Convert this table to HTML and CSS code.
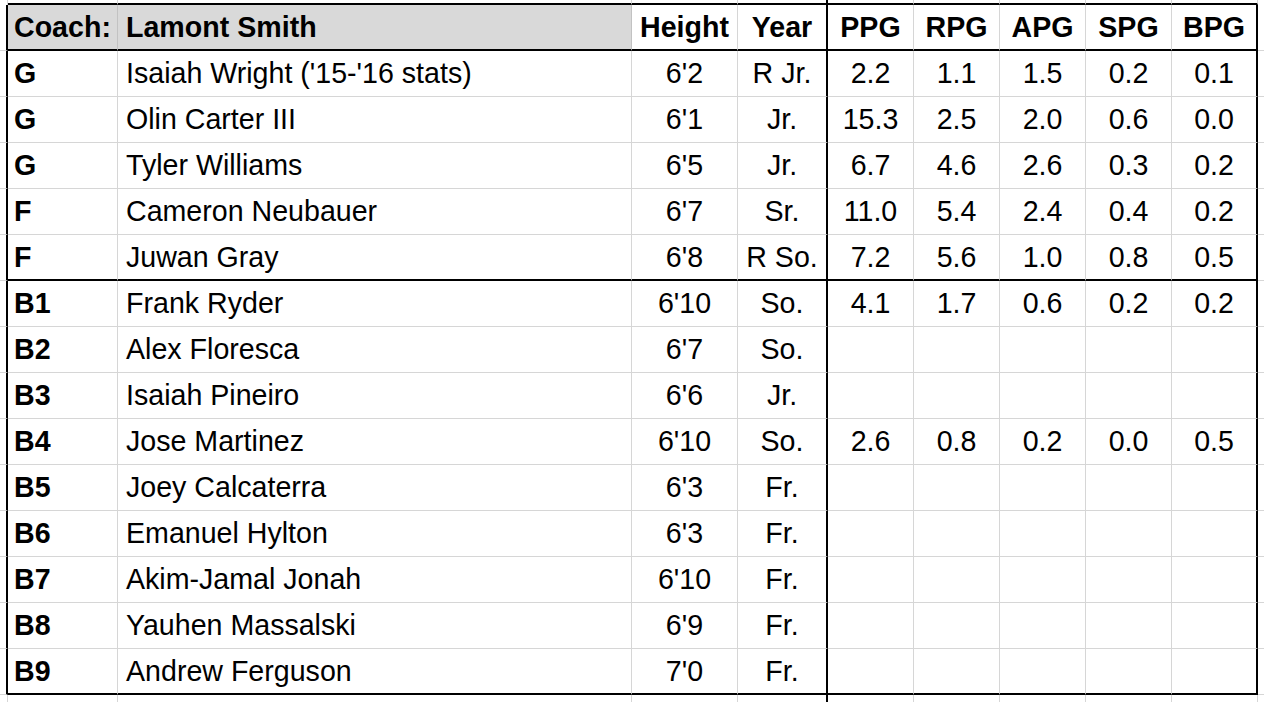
FILE: index.html
```html
<!DOCTYPE html>
<html>
<head>
<meta charset="utf-8">
<title>Roster</title>
<link rel="stylesheet" href="styles.css">
</head>
<body>
<table class="sheet">
  <colgroup>
    <col class="w-edge"><col class="w-pos"><col class="w-name"><col class="w-height"><col class="w-year">
    <col class="w-stat"><col class="w-stat"><col class="w-stat"><col class="w-stat"><col class="w-stat"><col class="w-extra">
  </colgroup>
  <tr class="r-top">
    <td class="e"></td><td class="tb"></td><td class="tb"></td><td class="tb"></td><td class="tb tr"></td>
    <td class="tb"></td><td class="tb"></td><td class="tb"></td><td class="tb"></td><td class="tb"></td><td class="x"></td>
  </tr>
  <tr class="r-head">
    <td class="e tr"></td>
    <td class="hd gray bb">Coach:</td>
    <td class="hd gray bb name">Lamont Smith</td>
    <td class="hd c bb">Height</td>
    <td class="hd c bb tr">Year</td>
    <td class="hd c bb">PPG</td>
    <td class="hd c bb">RPG</td>
    <td class="hd c bb">APG</td>
    <td class="hd c bb">SPG</td>
    <td class="hd c bb tr">BPG</td>
    <td class="x"></td>
  </tr>
  <tr><td class="e tr"></td><td class="pos">G</td><td class="name">Isaiah Wright ('15-'16 stats)</td><td class="c">6'2</td><td class="c tr">R Jr.</td><td class="c">2.2</td><td class="c">1.1</td><td class="c">1.5</td><td class="c">0.2</td><td class="c tr">0.1</td><td class="x"></td></tr>
  <tr><td class="e tr"></td><td class="pos">G</td><td class="name">Olin Carter III</td><td class="c">6'1</td><td class="c tr">Jr.</td><td class="c">15.3</td><td class="c">2.5</td><td class="c">2.0</td><td class="c">0.6</td><td class="c tr">0.0</td><td class="x"></td></tr>
  <tr><td class="e tr"></td><td class="pos">G</td><td class="name">Tyler Williams</td><td class="c">6'5</td><td class="c tr">Jr.</td><td class="c">6.7</td><td class="c">4.6</td><td class="c">2.6</td><td class="c">0.3</td><td class="c tr">0.2</td><td class="x"></td></tr>
  <tr><td class="e tr"></td><td class="pos">F</td><td class="name">Cameron Neubauer</td><td class="c">6'7</td><td class="c tr">Sr.</td><td class="c">11.0</td><td class="c">5.4</td><td class="c">2.4</td><td class="c">0.4</td><td class="c tr">0.2</td><td class="x"></td></tr>
  <tr><td class="e tr"></td><td class="pos bb">F</td><td class="name bb">Juwan Gray</td><td class="c bb">6'8</td><td class="c bb tr">R So.</td><td class="c bb">7.2</td><td class="c bb">5.6</td><td class="c bb">1.0</td><td class="c bb">0.8</td><td class="c bb tr">0.5</td><td class="x"></td></tr>
  <tr><td class="e tr"></td><td class="pos">B1</td><td class="name">Frank Ryder</td><td class="c">6'10</td><td class="c tr">So.</td><td class="c">4.1</td><td class="c">1.7</td><td class="c">0.6</td><td class="c">0.2</td><td class="c tr">0.2</td><td class="x"></td></tr>
  <tr><td class="e tr"></td><td class="pos">B2</td><td class="name">Alex Floresca</td><td class="c">6'7</td><td class="c tr">So.</td><td></td><td></td><td></td><td></td><td class="tr"></td><td class="x"></td></tr>
  <tr><td class="e tr"></td><td class="pos">B3</td><td class="name">Isaiah Pineiro</td><td class="c">6'6</td><td class="c tr">Jr.</td><td></td><td></td><td></td><td></td><td class="tr"></td><td class="x"></td></tr>
  <tr><td class="e tr"></td><td class="pos">B4</td><td class="name">Jose Martinez</td><td class="c">6'10</td><td class="c tr">So.</td><td class="c">2.6</td><td class="c">0.8</td><td class="c">0.2</td><td class="c">0.0</td><td class="c tr">0.5</td><td class="x"></td></tr>
  <tr><td class="e tr"></td><td class="pos">B5</td><td class="name">Joey Calcaterra</td><td class="c">6'3</td><td class="c tr">Fr.</td><td></td><td></td><td></td><td></td><td class="tr"></td><td class="x"></td></tr>
  <tr><td class="e tr"></td><td class="pos">B6</td><td class="name">Emanuel Hylton</td><td class="c">6'3</td><td class="c tr">Fr.</td><td></td><td></td><td></td><td></td><td class="tr"></td><td class="x"></td></tr>
  <tr><td class="e tr"></td><td class="pos">B7</td><td class="name">Akim-Jamal Jonah</td><td class="c">6'10</td><td class="c tr">Fr.</td><td></td><td></td><td></td><td></td><td class="tr"></td><td class="x"></td></tr>
  <tr><td class="e tr"></td><td class="pos">B8</td><td class="name">Yauhen Massalski</td><td class="c">6'9</td><td class="c tr">Fr.</td><td></td><td></td><td></td><td></td><td class="tr"></td><td class="x"></td></tr>
  <tr><td class="e tr"></td><td class="pos bb">B9</td><td class="name bb">Andrew Ferguson</td><td class="c bb">7'0</td><td class="c bb tr">Fr.</td><td class="bb"></td><td class="bb"></td><td class="bb"></td><td class="bb"></td><td class="bb tr"></td><td class="x"></td></tr>
  <tr class="r-bottom">
    <td class="e"></td><td></td><td></td><td></td><td class="tr"></td>
    <td></td><td></td><td></td><td></td><td></td><td class="x"></td>
  </tr>
</table>
</body>
</html>
```

FILE: styles.css
```css
html, body {
  margin: 0;
  padding: 0;
  background: #ffffff;
  overflow: hidden;
}

body {
  font-family: "Liberation Sans", Arial, Helvetica, sans-serif;
  color: #000000;
}

.sheet {
  border-collapse: separate;
  border-spacing: 0;
  table-layout: fixed;
  width: 1298px;
}

.w-edge { width: 8px; }
.w-pos { width: 110px; }
.w-name { width: 514px; }
.w-height { width: 106px; }
.w-year { width: 90px; }
.w-stat { width: 86px; }
.w-extra { width: 40px; }

.sheet td {
  padding: 0 6px;
  border-right: 1px solid #d6d6d6;
  border-bottom: 1px solid #d6d6d6;
  font-size: 28.6px;
  line-height: normal;
  white-space: nowrap;
  overflow: hidden;
  vertical-align: middle;
  text-align: left;
}

.sheet td.name {
  padding-left: 8px;
}

.sheet tr {
  height: 46px;
}

.sheet .r-top {
  height: 5px;
}

.sheet .r-top td {
  padding: 0;
  font-size: 0;
}

.sheet .r-top td.tb {
  border-bottom: 2px solid #000000;
}

.sheet .r-top td.e,
.sheet .r-top td.x {
  border-bottom: none;
}

.sheet .r-bottom {
  height: 10px;
}

.sheet .r-bottom td {
  padding: 0;
  font-size: 0;
  border-bottom: none;
}

.sheet td.e,
.sheet td.x {
  padding: 0;
}

.sheet td.tr {
  border-right: 2px solid #000000;
}

.sheet td.bb {
  border-bottom: 2px solid #000000;
}

.sheet td.c {
  text-align: center;
}

.sheet td.pos,
.sheet td.hd {
  font-weight: bold;
}

.sheet td.gray {
  background: #d9d9d9;
  border-right-color: #c2c2c2;
}
```
